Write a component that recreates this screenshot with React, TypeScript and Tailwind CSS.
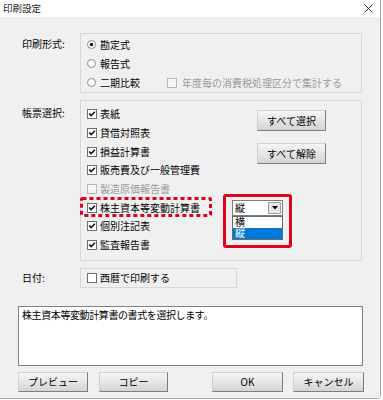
import React from 'react';

const font = "font-['Noto_Sans_CJK_JP','Noto_Sans_CJK_SC',sans-serif]";

const Check = ({ checked = false, disabled = false }: { checked?: boolean; disabled?: boolean }) => (
  <svg width="10" height="10" viewBox="0 0 10 10" className="shrink-0">
    <rect x="0.5" y="0.5" width="9" height="9" fill={disabled ? '#f4f4f4' : '#fff'} stroke={disabled ? '#b8b8b8' : '#6e6e6e'} />
    {checked && <path d="M2.2 4.6 L4.1 6.6 L7.9 2.8" stroke="#111" strokeWidth="1.5" fill="none" />}
  </svg>
);

const Radio = ({ checked = false }: { checked?: boolean }) => (
  <svg width="9" height="9" viewBox="0 0 9 9" className="shrink-0">
    <circle cx="4.5" cy="4.5" r="4" fill="#fff" stroke="#8a8a8a" />
    {checked && <circle cx="4.5" cy="4.5" r="1.7" fill="#111" />}
  </svg>
);

const Btn = ({ children, className = '' }: { children: React.ReactNode; className?: string }) => (
  <div
    className={`flex items-center justify-center border border-t-[#cfcfcf] border-l-[#cfcfcf] border-r-[#7e7e7e] border-b-[#7e7e7e] bg-linear-to-b from-[#f6f6f6] to-[#d4d4d4] text-[10px] text-black ${className}`}
  >
    {children}
  </div>
);

const CheckRow = ({ label, checked = true, disabled = false }: { label: string; checked?: boolean; disabled?: boolean }) => (
  <div className="flex h-[18.7px] items-center gap-[3px] pl-[6px]">
    <Check checked={checked} disabled={disabled} />
    <span className={disabled ? 'text-[#9a9a9a]' : 'text-black'}>{label}</span>
  </div>
);

export default function App() {
  return (
    <div className={`w-[383px] h-[400px] bg-white overflow-hidden leading-none text-[10px] ${font}`}>
      <div className="flex h-[399px] w-[381px] flex-col border-r border-b border-[#a6a6a6] rounded-br-[4px]">
        {/* title bar */}
        <div className="flex h-[17px] items-center justify-between bg-white pl-[3px] pr-[7px]">
          <span className="text-[9.5px] text-[#222]">印刷設定</span>
          <svg width="9" height="9" viewBox="0 0 9 9">
            <path d="M0.5 0.5 L8.5 8.5 M8.5 0.5 L0.5 8.5" stroke="#333" strokeWidth="1" />
          </svg>
        </div>

        <div className="flex flex-1 flex-col bg-[#f0f0f0]">
          {/* 印刷形式 */}
          <div className="mt-[16px] flex">
            <div className="w-[80px] pl-[22px] pt-[1px]">
              <div className="flex h-[19px] items-center">印刷形式:</div>
            </div>
            <div className="h-[60px] w-[282px] border border-[#d7d7d7] pt-[1px]">
              <div className="flex h-[19px] items-center gap-[4px] pl-[6px]">
                <Radio checked />
                <span>勘定式</span>
              </div>
              <div className="flex h-[19px] items-center gap-[4px] pl-[6px]">
                <Radio />
                <span>報告式</span>
              </div>
              <div className="flex h-[19px] items-center gap-[4px] pl-[6px]">
                <Radio />
                <span className="w-[63px]">二期比較</span>
                <Check disabled />
                <span className="ml-[1px] text-[#9a9a9a]">年度毎の消費税処理区分で集計する</span>
              </div>
            </div>
          </div>

          {/* 帳票選択 */}
          <div className="mt-[7px] flex">
            <div className="w-[80px] pl-[22px] pt-[4px]">
              <div className="flex h-[18.7px] items-center">帳票選択:</div>
            </div>
            <div className="h-[161px] w-[282px] border border-[#d7d7d7] pt-[4px]">
              <div className="flex">
                <div className="flex flex-col">
                  <CheckRow label="表紙" />
                  <CheckRow label="貸借対照表" />
                  <CheckRow label="損益計算書" />
                  <CheckRow label="販売費及び一般管理費" />
                </div>
                <div className="ml-auto flex flex-col gap-[12px] pr-[35px] pt-[5px]">
                  <Btn className="h-[21px] w-[69px]">すべて選択</Btn>
                  <Btn className="h-[21px] w-[69px]">すべて解除</Btn>
                </div>
              </div>
              <CheckRow label="製造原価報告書" checked={false} disabled />
              <div className="relative flex h-[18.7px] items-center gap-[3px] pl-[6px]">
                <svg width="132" height="20" viewBox="0 0 132 20" className="absolute left-[-1px] top-[-1.5px]">
                  <rect x="1.5" y="1.5" width="129" height="17" rx="1" fill="none" stroke="#e3001b" strokeWidth="3" strokeDasharray="4 3" />
                </svg>
                <Check checked />
                <span className="w-[129px]">株主資本等変動計算書</span>
                <div className="relative flex h-[16px] w-[51px] items-center border border-[#7a7a7a] bg-white">
                  <span className="pl-[2px]">縦</span>
                  <div className="ml-auto mr-[1px] flex h-[12px] w-[13px] items-center justify-center border border-[#a0a0a0] bg-[#e8e8e8]">
                    <svg width="6" height="4" viewBox="0 0 6 4">
                      <path d="M0 0 L6 0 L3 3.5 Z" fill="#000" />
                    </svg>
                  </div>
                  <div className="absolute left-[-1px] top-[15px] flex w-[51px] flex-col border border-[#6a6a6a] bg-white">
                    <div className="flex h-[11px] items-center pl-[2px]">横</div>
                    <div className="flex h-[11px] items-center bg-[#0078d7] pl-[2px] text-white">縦</div>
                  </div>
                  <div className="absolute left-[-10px] top-[-7px] h-[54px] w-[69px] rounded-[3px] border-[3px] border-[#e3001b]" />
                </div>
              </div>
              <CheckRow label="個別注記表" />
              <CheckRow label="監査報告書" />
            </div>
          </div>

          {/* 日付 */}
          <div className="mt-[7px] flex">
            <div className="flex h-[20px] w-[80px] items-center pl-[22px]">日付:</div>
            <div className="flex h-[20px] w-[157px] items-center gap-[3px] border border-[#d7d7d7] pl-[6px]">
              <Check />
              <span>西暦で印刷する</span>
            </div>
          </div>

          {/* description */}
          <div className="ml-[18px] mt-[18px] h-[60px] w-[345px] border border-[#828282] bg-white pl-[3px] pt-[3px] tracking-[-0.4px]">
            株主資本等変動計算書の書式を選択します。
          </div>

          {/* bottom buttons */}
          <div className="mt-[6px] flex">
            <Btn className="ml-[18px] h-[20px] w-[70px]">プレビュー</Btn>
            <Btn className="ml-[11px] h-[20px] w-[69px]">コピー</Btn>
            <Btn className="ml-[44px] h-[20px] w-[71px]">OK</Btn>
            <Btn className="ml-[10px] h-[20px] w-[71px]">キャンセル</Btn>
          </div>
        </div>
      </div>
    </div>
  );
}
